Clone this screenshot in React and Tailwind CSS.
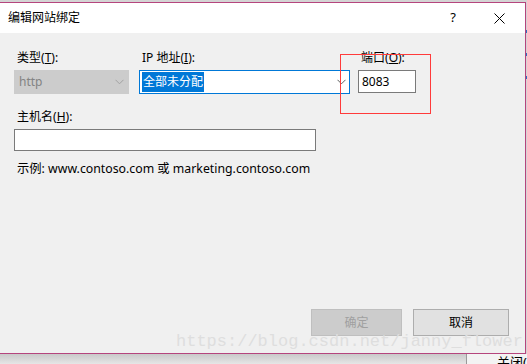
import React from 'react';

const font = { fontFamily: '"Segoe UI", "Noto Sans", "Noto Sans CJK SC", sans-serif' };

function Label({ text, hotkey }) {
  return (
    <div className="h-[16px] pl-[3px] text-[12px] leading-[16px] text-[#000]">
      {text}(<span className="underline">{hotkey}</span>):
    </div>
  );
}

function Chevron({ color }) {
  return (
    <svg width="9" height="6" viewBox="0 0 9 6" className="shrink-0">
      <path d="M0.5 0.8 L4.5 4.8 L8.5 0.8" fill="none" stroke={color} strokeWidth="1" />
    </svg>
  );
}

export default function App() {
  return (
    <div className="relative w-[527px] h-[364px] overflow-hidden bg-[#d4d4d4]" style={font}>
      <div className="pt-[2px] flex">
        {/* dialog window */}
        <div className="w-[526px] h-[352px] flex flex-col border-t border-r border-b border-[#b5457d] bg-[#f0f0f0]">
          <div className="h-[30px] shrink-0 bg-white flex items-center pl-[8px]">
            <span className="text-[12px] text-black">编辑网站绑定</span>
            <span className="ml-auto text-[13px] text-black w-[10px] text-center">?</span>
            <svg width="11" height="11" viewBox="0 0 11 11" className="ml-[36px] mr-[20px]">
              <path d="M0.5 0.5 L10.5 10.5 M10.5 0.5 L0.5 10.5" stroke="#000" strokeWidth="1" />
            </svg>
          </div>

          <div className="flex-1 flex flex-col pl-[14px] pt-[17px]">
            <div className="flex items-start">
              <div className="w-[115px] flex flex-col gap-[4px]">
                <Label text="类型" hotkey="T" />
                <div className="h-[24px] flex items-center justify-between px-[4px] bg-[#cccccc] border border-[#cccccc]">
                  <span className="text-[12px] text-[#838383]">http</span>
                  <Chevron color="#a2a2a2" />
                </div>
              </div>
              <div className="w-[211px] ml-[10px] flex flex-col gap-[4px]">
                <Label text="IP 地址" hotkey="I" />
                <div className="h-[24px] flex items-center justify-between pl-[2px] pr-[3px] bg-white border border-[#0078d7]">
                  <span className="text-[12px] leading-[20px] px-[1px] bg-[#0078d7] text-white">全部未分配</span>
                  <Chevron color="#606060" />
                </div>
              </div>
              <div className="w-[58px] ml-[8px] flex flex-col gap-[4px]">
                <Label text="端口" hotkey="O" />
                <div className="h-[23px] flex items-center px-[3px] bg-white border border-[#7a7a7a]">
                  <span className="text-[12px] text-black">8083</span>
                </div>
              </div>
            </div>

            <div className="mt-[15px]">
              <Label text="主机名" hotkey="H" />
            </div>
            <div className="mt-[4px] w-[302px] h-[22px] bg-white border border-[#7a7a7a]" />

            <div className="mt-[10px] pl-[3px] text-[12.3px] leading-[16px] text-black">
              示例: www.contoso.com 或 marketing.contoso.com
            </div>

            <div className="mt-auto mb-[17px] flex justify-end gap-[11px] pr-[16px]">
              <button className="w-[91px] h-[27px] bg-[#cccccc] border border-[#bfbfbf] text-[12px] text-[#a0a0a0]">
                确定
              </button>
              <button className="w-[96px] h-[27px] bg-[#e1e1e1] border border-[#adadad] text-[12px] text-black">
                取消
              </button>
            </div>
          </div>
        </div>
        <div className="w-[1px] flex flex-col gap-[20px] pt-[28px]">
          <div className="h-[3px] bg-[#2f6fbf]" />
          <div className="h-[3px] bg-[#2f6fbf]" />
          <div className="h-[3px] bg-[#2f6fbf]" />
        </div>
      </div>

      {/* strip below the dialog */}
      <div className="flex h-[10px]">
        <div className="w-[466px] bg-gradient-to-b from-[#c9c9c9] to-[#e6e6e6]" />
        <div className="w-[1px] bg-[#9a9a9a]" />
        <div className="flex-1 bg-[#f3f3f3] pl-[30px] pt-[1px] text-[13px] leading-[14px] text-black overflow-hidden whitespace-nowrap">关闭(</div>
      </div>

      {/* red annotation box */}
      <div className="absolute left-[340px] top-[54px] w-[91px] h-[60px] border border-[#ff3b3b]" />

      {/* watermark */}
      <div
        className="absolute left-[176px] top-[332px] text-[17px] leading-[20px] text-[#dedede] whitespace-nowrap"
        style={{ fontFamily: '"Liberation Mono", "DejaVu Sans Mono", monospace' }}
      >
        https://blog.csdn.net/janny_flower
      </div>
    </div>
  );
}
